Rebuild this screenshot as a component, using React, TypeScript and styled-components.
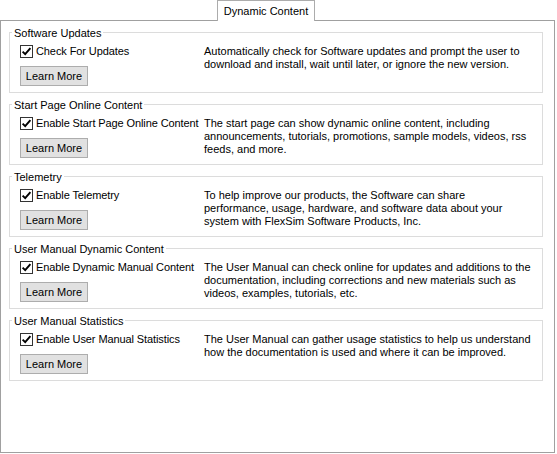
import React from "react";
import styled, { createGlobalStyle } from "styled-components";

const Global = createGlobalStyle`
  html, body { margin: 0; padding: 0; background: #ffffff; }
  body { font-family: "Liberation Sans", Arial, sans-serif; font-size: 11px; color: #000; }
  * { box-sizing: border-box; }
`;

const Window = styled.div`
  width: 557px;
  height: 454px;
  background: #ffffff;
  display: flex;
  flex-direction: column;
`;

const TabStrip = styled.div`
  height: 21px;
  display: flex;
  padding-left: 217px;
`;

const Tab = styled.div`
  position: relative;
  z-index: 1;
  width: 98px;
  height: 21px;
  border: 1px solid #acacac;
  border-bottom: none;
  background: #ffffff;
  text-align: center;
  line-height: 20px;
  font-size: 11px;
`;

const Panel = styled.div`
  margin-top: -1px;
  width: 555px;
  height: 433px;
  border: 1px solid #a0a0a0;
  background: #ffffff;
  padding: 5px 0 0 8px;
  display: flex;
  flex-direction: column;
  gap: 5px;
`;

const Group = styled.fieldset`
  margin: 0;
  width: 534px;
  border: 1px solid #dcdcdc;
  padding: 6px 10px 6px 10px;
  min-width: 0;
`;

const Legend = styled.legend`
  margin-left: -8px;
  padding: 0 2px;
  font-size: 11px;
  line-height: 14px;
  height: 13px;
`;

const Row = styled.div`
  display: flex;
  align-items: flex-start;
`;

const LeftCol = styled.div`
  width: 184px;
  flex: none;
  display: flex;
  flex-direction: column;
  align-items: flex-start;
`;

const CheckRow = styled.label`
  display: flex;
  align-items: center;
  gap: 3px;
  height: 13px;
  line-height: 13px;
  white-space: nowrap;
  letter-spacing: -0.1px;
`;

const Box = styled.span`
  width: 13px;
  height: 13px;
  flex: none;
  border: 1px solid #333333;
  background: #ffffff;
  display: flex;
  align-items: center;
  justify-content: center;
`;

const Button = styled.button`
  margin-top: 8px;
  width: 68px;
  height: 20px;
  padding: 0;
  border: 1px solid #adadad;
  background: #e1e1e1;
  font-family: inherit;
  font-size: 11px;
  color: #000;
  line-height: 18px;
`;

const Description = styled.div`
  line-height: 13px;
`;

const Line = styled.div`
  white-space: nowrap;
`;

const Check = () => (
  <svg width="11" height="11" viewBox="0 0 11 11">
    <path d="M1.6 5.6 L4.2 8.2 L9.4 2.2" fill="none" stroke="#000" strokeWidth="1.9" />
  </svg>
);

type Item = { title: string; label: string; lines: string[] };

const items: Item[] = [
  {
    title: "Software Updates",
    label: "Check For Updates",
    lines: [
      "Automatically check for Software updates and prompt the user to",
      "download and install, wait until later, or ignore the new version.",
    ],
  },
  {
    title: "Start Page Online Content",
    label: "Enable Start Page Online Content",
    lines: [
      "The start page can show dynamic online content, including",
      "announcements, tutorials, promotions, sample models, videos, rss",
      "feeds, and more.",
    ],
  },
  {
    title: "Telemetry",
    label: "Enable Telemetry",
    lines: [
      "To help improve our products, the Software can share",
      "performance, usage, hardware, and software data about your",
      "system with FlexSim Software Products, Inc.",
    ],
  },
  {
    title: "User Manual Dynamic Content",
    label: "Enable Dynamic Manual Content",
    lines: [
      "The User Manual can check online for updates and additions to the",
      "documentation, including corrections and new materials such as",
      "videos, examples, tutorials, etc.",
    ],
  },
  {
    title: "User Manual Statistics",
    label: "Enable User Manual Statistics",
    lines: [
      "The User Manual can gather usage statistics to help us understand",
      "how the documentation is used and where it can be improved.",
    ],
  },
];

export default function App() {
  return (
    <Window>
      <Global />
      <TabStrip>
        <Tab>Dynamic Content</Tab>
      </TabStrip>
      <Panel>
        {items.map((it) => (
          <Group key={it.title}>
            <Legend>{it.title}</Legend>
            <Row>
              <LeftCol>
                <CheckRow>
                  <Box>
                    <Check />
                  </Box>
                  {it.label}
                </CheckRow>
                <Button>Learn More</Button>
              </LeftCol>
              <Description>
                {it.lines.map((l) => (
                  <Line key={l}>{l}</Line>
                ))}
              </Description>
            </Row>
          </Group>
        ))}
      </Panel>
    </Window>
  );
}
